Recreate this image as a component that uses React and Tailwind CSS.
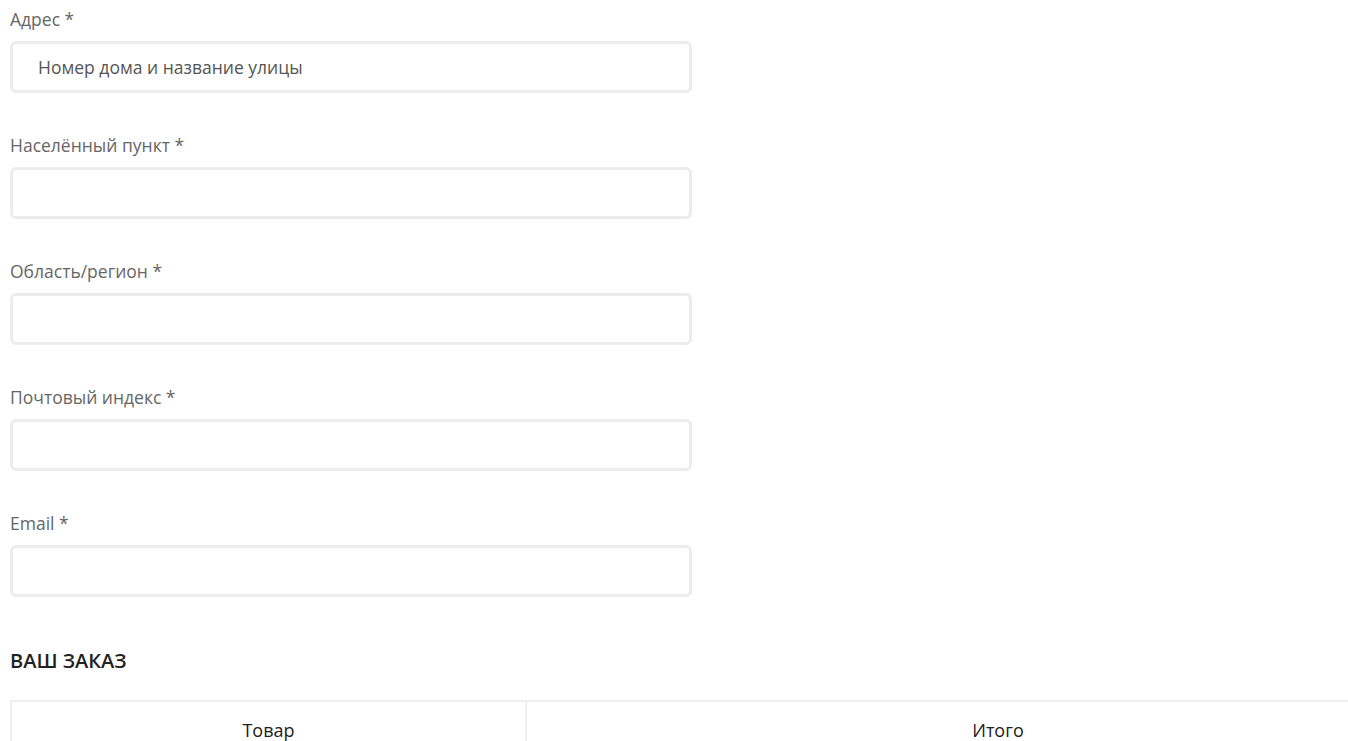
const fields = [
  { label: "Адрес *", placeholder: "Номер дома и название улицы" },
  { label: "Населённый пункт *", placeholder: "" },
  { label: "Область/регион *", placeholder: "" },
  { label: "Почтовый индекс *", placeholder: "" },
  { label: "Email *", placeholder: "" },
];

export default function App() {
  return (
    <div
      className="w-[1348px] h-[741px] overflow-hidden bg-white"
      style={{ fontFamily: '"Open Sans", "Noto Sans", sans-serif' }}
    >
      <div className="pl-[10px] pt-[7px]">
        <div className="w-[682px] flex flex-col gap-[40px]">
          {fields.map((f) => (
            <div key={f.label} className="flex flex-col gap-[10px]">
              <label className="text-[17.5px] leading-[24px] text-[#666]">
                {f.label}
              </label>
              <input
                className="h-[52px] w-full rounded-[6px] border-[3px] border-[#ececec] bg-white pl-[25px] text-[17.5px] text-[#555] placeholder:text-[#555] outline-none"
                placeholder={f.placeholder}
              />
            </div>
          ))}
        </div>

        <h3 className="mt-[50px] text-[20px] leading-[27px] font-semibold text-[#222]">
          ВАШ ЗАКАЗ
        </h3>

        <div className="mt-[26px] w-[1461px] flex border-2 border-[#eeeeee] border-b-0">
          <div className="w-[515px] border-r-2 border-[#eeeeee] pt-[15px] pb-[16px] text-center text-[18px] leading-[26px] font-medium text-[#222]">
            Товар
          </div>
          <div className="flex-1 pt-[15px] pb-[16px] text-center text-[18px] leading-[26px] font-medium text-[#222]">
            Итого
          </div>
        </div>
      </div>
    </div>
  );
}
